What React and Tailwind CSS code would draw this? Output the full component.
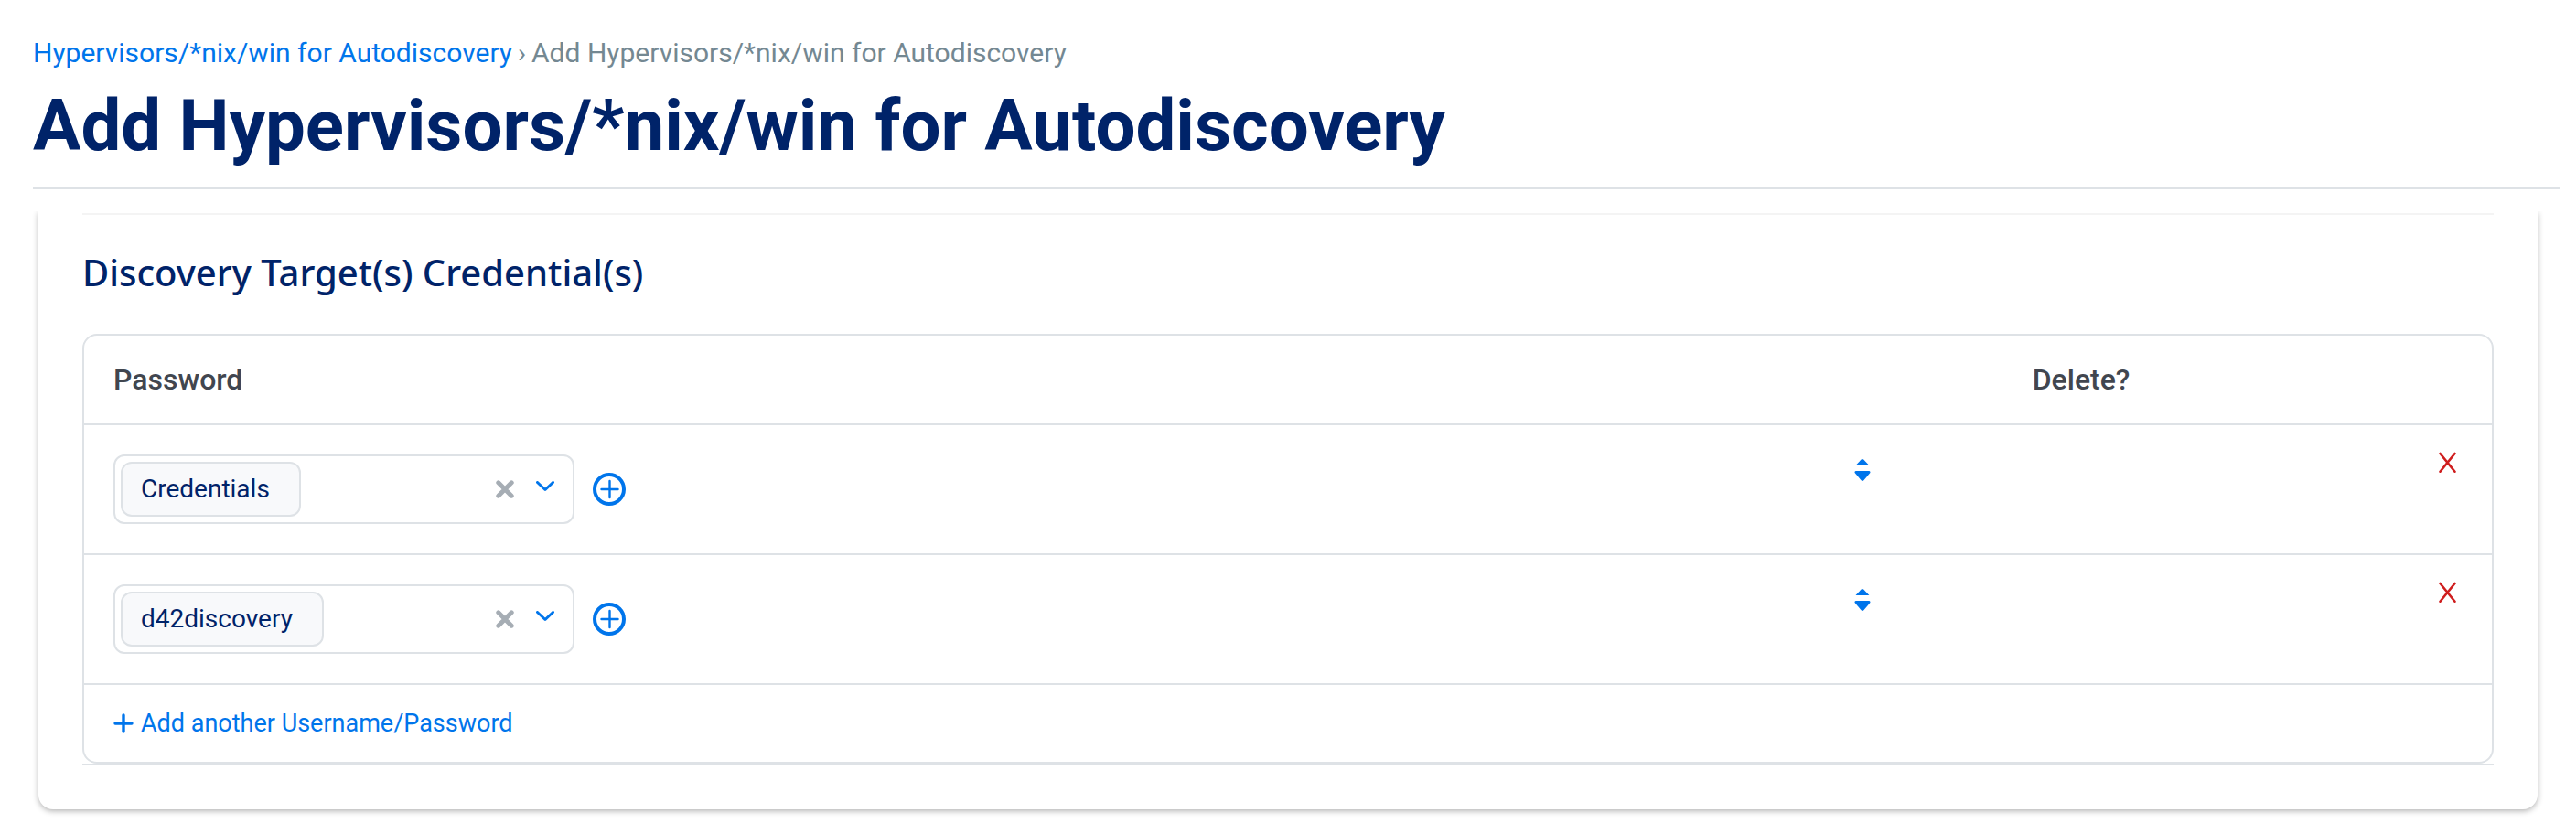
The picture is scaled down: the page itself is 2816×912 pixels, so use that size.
import { useState } from "react";

const CREDENTIALS = ["Credentials", "d42discovery"];

const ClearIcon = () => (
  <svg width="20" height="20" viewBox="0 0 20 20" fill="none" stroke="#a6adb4" strokeWidth="5" strokeLinecap="round">
    <path d="M2.8 2.8 17.2 17.2M17.2 2.8 2.8 17.2" />
  </svg>
);

const ChevronIcon = () => (
  <svg width="20" height="12" viewBox="0 0 20 12" fill="none" stroke="#0075eb" strokeWidth="3" strokeLinecap="round" strokeLinejoin="round">
    <path d="M1.5 1.5 10 9.5 18.5 1.5" />
  </svg>
);

const AddCircleIcon = () => (
  <svg width="36" height="36" viewBox="0 0 36 36" fill="none" stroke="#0075eb" strokeLinecap="round">
    <circle cx="18" cy="18" r="16" strokeWidth="4" />
    <path d="M18.5 9v18M9.5 18h18" strokeWidth="2.4" />
  </svg>
);

const SortIcon = () => (
  <svg width="18" height="32" viewBox="0 0 18 32" fill="#0075eb">
    <path d="M1.5 12 7.6 5.6a1.8 1.8 0 0 1 2.6 0L16.4 12Z" />
    <path d="M1.6 18h14.8q1.4.3 1 2l-7 8.2a1.9 1.9 0 0 1-2.8 0L.6 20q-.4-1.7 1-2Z" />
  </svg>
);

const DeleteIcon = () => (
  <svg width="20" height="24" viewBox="0 0 20 24" fill="none" stroke="#cf1e1e" strokeWidth="2.6" strokeLinecap="round">
    <path d="M1.5 3 17.5 22.7M17.5 3 1.5 22.7" />
  </svg>
);

const PlusIcon = () => (
  <svg width="22" height="22" viewBox="0 0 22 22" fill="none" stroke="#0075eb" strokeWidth="3.4" strokeLinecap="round">
    <path d="M11 2v18M2 11h18" />
  </svg>
);

const CredentialSelect = ({ defaultValue }) => {
  const [value, setValue] = useState(defaultValue);

  return (
    <div className="flex items-center gap-5">
      <div className="flex w-[504px] items-center rounded-xl border-2 border-[#dee2e6] p-1.5 pr-5">
        <select
          value={value}
          onChange={(e) => setValue(e.target.value)}
          aria-labelledby="password-heading"
          className="h-[60px] appearance-none rounded-xl border-2 border-[#dee2e6] bg-[#f8f9fb] pr-8 pl-5 text-[28px] text-[#002369] [field-sizing:content]"
        >
          {CREDENTIALS.map((name) => (
            <option key={name}>{name}</option>
          ))}
        </select>
        <button type="button" aria-label="Clear" className="ml-auto">
          <ClearIcon />
        </button>
        <button type="button" aria-label="Open list" className="ml-6 pb-1.5">
          <ChevronIcon />
        </button>
      </div>
      <button type="button" aria-label="Add password">
        <AddCircleIcon />
      </button>
    </div>
  );
};

const CredentialsTable = () => (
  <div className="overflow-hidden rounded-2xl border-2 border-[#dee2e6]">
    <table className="w-full table-fixed border-separate border-spacing-0 text-left">
      <thead>
        <tr className="text-[32px] leading-[48px] text-[#41464f]">
          <th id="password-heading" className="w-[72.3%] px-8 py-6 font-medium">
            Password
          </th>
          <td className="w-[7.4%]" />
          <th className="px-8 py-6 font-medium">Delete?</th>
        </tr>
      </thead>
      <tbody>
        {CREDENTIALS.map((name) => (
          <tr key={name} className="align-top">
            <td className="border-t-2 border-[#dee2e6] px-8 py-8">
              <CredentialSelect defaultValue={name} />
            </td>
            <td className="border-t-2 border-[#dee2e6] px-8 py-8">
              <button type="button" aria-label="Reorder">
                <SortIcon />
              </button>
            </td>
            <td className="border-t-2 border-[#dee2e6] px-[38px] py-7 text-right">
              <button type="button" aria-label="Delete">
                <DeleteIcon />
              </button>
            </td>
          </tr>
        ))}
        <tr>
          <td colSpan={3} className="border-t-2 border-[#dee2e6] px-8 py-5">
            <a href="#add" className="flex items-center gap-2 text-[27px] leading-[44px] text-[#0075eb]">
              <PlusIcon />
              Add another Username/Password
            </a>
          </td>
        </tr>
      </tbody>
    </table>
  </div>
);

const App = () => (
  <div className="min-h-screen bg-white font-['Roboto','Liberation_Sans',sans-serif]">
    <header className="mr-[18px] ml-9 border-b-2 border-[#dee2e6] pt-[38px] pb-[19px]">
      <nav className="flex gap-1.5 text-[30px] leading-[40px] text-[#748892]">
        <a href="#list" className="text-[#0075eb]">
          Hypervisors/*nix/win for Autodiscovery
        </a>
        <span>›</span>
        <span>Add Hypervisors/*nix/win for Autodiscovery</span>
      </nav>
      <h1 className="mt-3 text-[78px] leading-[96px] font-bold text-[#002369]">
        Add Hypervisors/*nix/win for Autodiscovery
      </h1>
    </header>

    <main className="mt-6 overflow-hidden px-[42px] pb-6">
      <div className="rounded-b-2xl px-12 pt-0.5 pb-12 shadow-[0_2px_6px_rgba(0,0,0,0.3)]">
        <section className="border-t-2 border-b-2 border-t-[#f4f4f4] border-b-[#dee2e6]">
          <h2 className="pt-[38px] pb-[42px] font-['Noto_Sans',sans-serif] text-[40px] leading-[50px] font-medium text-[#002369]">
            Discovery Target(s) Credential(s)
          </h2>
          <CredentialsTable />
        </section>
      </div>
    </main>
  </div>
);

export default App;
